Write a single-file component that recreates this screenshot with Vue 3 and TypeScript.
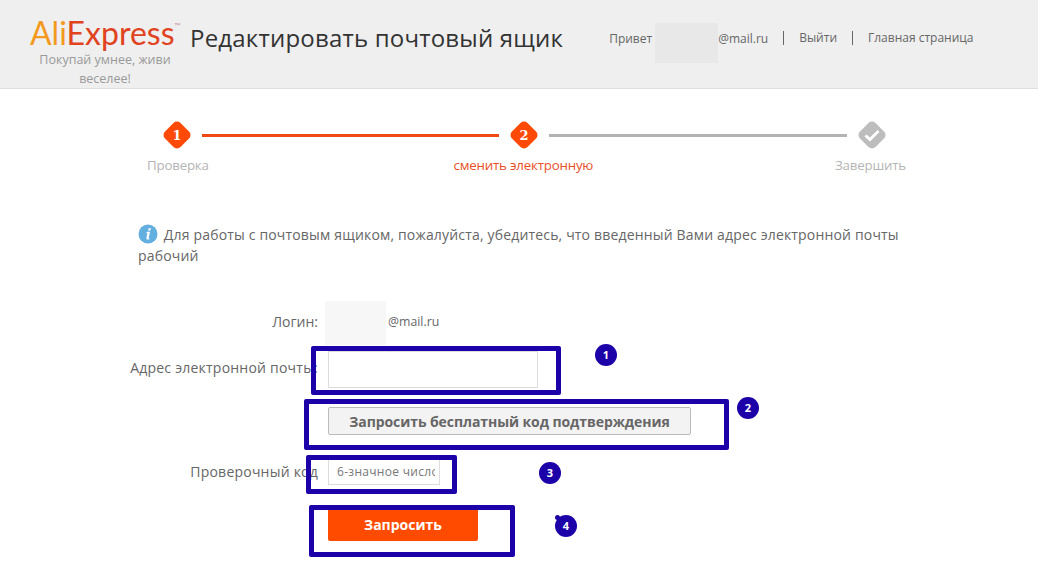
<script setup lang="ts">
interface Box { id: number; left: number; top: number; width: number; height: number }
interface Dot { id: number; left: number; top: number }
const boxes: Box[] = [
  { id: 1, left: 311, top: 346, width: 250, height: 49 },
  { id: 2, left: 304, top: 399, width: 425, height: 51 },
  { id: 3, left: 306, top: 455, width: 151, height: 39 },
  { id: 4, left: 309, top: 505, width: 206, height: 52 },
]
const dots: Dot[] = [
  { id: 1, left: 595, top: 344 },
  { id: 2, left: 737, top: 397 },
  { id: 3, left: 539, top: 462 },
  { id: 4, left: 555, top: 515 },
]
const px = (n: number) => `${n}px`
</script>

<template>
  <div class="page">
    <header class="top">
      <div class="brand">
        <div class="logo"><span class="ali">Ali</span><span class="exp">Express</span><sup class="tm">™</sup></div>
        <div class="slogan">Покупай умнее, живи веселее!</div>
      </div>
      <h1 class="title">Редактировать почтовый ящик</h1>
      <nav class="nav">
        <span class="hello">Привет</span>
        <span class="mail">@mail.ru</span>
        <a class="link first">Выйти</a>
        <a class="link">Главная страница</a>
      </nav>
    </header>

    <section class="steps">
      <div class="track">
        <div class="diamond on"><span>1</span></div>
        <div class="line on"></div>
        <div class="diamond on"><span>2</span></div>
        <div class="line"></div>
        <div class="diamond done">
          <svg width="16" height="14" viewBox="0 0 16 14"><path d="M1.5 7.5 L6 11.5 L14.5 3" fill="none" stroke="#fff" stroke-width="3"/></svg>
        </div>
      </div>
      <div class="labels">
        <span class="lab">Проверка</span>
        <span class="lab active">сменить электронную</span>
        <span class="lab">Завершить</span>
      </div>
    </section>

    <p class="notice">
      <svg class="info" width="20" height="20" viewBox="0 0 20 20"><circle cx="10" cy="10" r="9.5" fill="#62afe0"/><path d="M10.6 4.2h2.3l-.5 2.2h-2.3zM9.8 7.7h2.3l-1.5 6.3c-.1.5.3.5 1 .2l-.2 1c-1.6.7-3.3.5-3-1.1l.9-4.6c.1-.6-.3-.6-.9-.4l.2-1z" fill="#fff"/></svg>
      Для работы с почтовым ящиком, пожалуйста, убедитесь, что введенный Вами адрес электронной почты рабочий
    </p>

    <form class="form" @submit.prevent>
      <div class="row login">
        <label class="lbl">Логин:</label>
        <span class="val">@mail.ru</span>
      </div>
      <div class="row email">
        <label class="lbl">Адрес электронной почты:</label>
        <input class="inp wide" type="text" />
      </div>
      <div class="row send">
        <span class="lbl"></span>
        <button class="ask" type="button">Запросить бесплатный код подтверждения</button>
      </div>
      <div class="row code">
        <label class="lbl">Проверочный код</label>
        <input class="inp short" type="text" placeholder="6-значное число" />
      </div>
      <div class="row submit">
        <span class="lbl"></span>
        <button class="go" type="submit">Запросить</button>
      </div>
    </form>

    <div class="blur b1"></div>
    <div class="blur b2"></div>

    <div
      v-for="b in boxes"
      :key="b.id"
      class="mark"
      :style="{ left: px(b.left), top: px(b.top), width: px(b.width), height: px(b.height) }"
    ></div>
    <div
      v-for="d in dots"
      :key="d.id"
      class="dot"
      :class="{ nub: d.id === 4 }"
      :style="{ left: px(d.left), top: px(d.top) }"
    >{{ d.id }}</div>
  </div>
</template>

<style>
html, body { margin: 0; background: #fff; }
</style>

<style scoped>
.page {
  position: relative;
  width: 1038px;
  height: 562px;
  overflow: hidden;
  background: #fff;
  font-family: "Open Sans", "Noto Sans", sans-serif;
  color: #666;
}
.top {
  display: flex;
  height: 88px;
  background: #efefef;
  border-bottom: 1px solid #dfdfdf;
}
.brand { width: 150px; margin-left: 30px; text-align: center; flex: none; }
.logo {
  margin-top: 15px;
  height: 36px;
  line-height: 36px;
  font-family: Lato, sans-serif;
  font-size: 32px;
  font-weight: 400;
  white-space: nowrap;
  text-align: left;
}
.ali { color: #f39a1e; }
.exp { color: #e0431d; }
.tm { font-size: 8px; color: #c99; vertical-align: 16px; line-height: 0; }
.slogan {
  width: 150px;
  margin-top: -1px;
  font-size: 12.5px;
  line-height: 19px;
  color: #999;
}
.title {
  margin: 21px 0 0 10px;
  font-size: 24px;
  line-height: 34px;
  font-weight: 400;
  letter-spacing: 0.2px;
  color: #333;
  white-space: nowrap;
}
.nav {
  display: flex;
  align-items: center;
  height: 14px;
  margin: 31px 0 0 46px;
  font-size: 12px;
  color: #666;
  white-space: nowrap;
}
.hello { width: 109px; }
.mail { width: 50px; }
.link { padding-left: 15px; margin-left: 15px; border-left: 1px solid #666; line-height: 14px; }
.steps { padding-top: 31px; }
.track { display: flex; align-items: center; margin-left: 163px; height: 30px; }
.diamond {
  position: relative;
  width: 28px;
  height: 28px;
  flex: none;
  display: flex;
  align-items: center;
  justify-content: center;
  color: #fff;
  font-family: "DejaVu Serif", serif;
  font-weight: 700;
  font-size: 13px;
}
.diamond::before {
  content: "";
  position: absolute;
  left: 3px;
  top: 3px;
  width: 22px;
  height: 22px;
  border-radius: 5px;
  transform: rotate(45deg);
  background: #ff4a07;
}
.diamond.done::before { background: #bdbdbd; }
.diamond span, .diamond svg { position: relative; }
.line { width: 298px; height: 3px; margin: 0 11px; background: #b3b3b3; }
.line.on { background: #f04a12; width: 297px; }
.labels {
  display: flex;
  justify-content: space-between;
  margin: 5px 132px 0 147px;
  font-size: 13.3px;
  line-height: 20px;
}
.lab { color: #b5b5b5; letter-spacing: -0.2px; }
.lab.active { color: #e8501f; margin-left: 3px; }
.notice {
  width: 790px;
  margin: 49px 0 0 138px;
  font-size: 14px;
  line-height: 21px;
  letter-spacing: 0.17px;
  color: #666;
}
.info { vertical-align: -4px; margin-right: 2px; }
.form { margin-top: 45px; font-size: 14px; }
.row { display: flex; align-items: center; }
.lbl { width: 318px; flex: none; text-align: right; color: #666; white-space: nowrap; letter-spacing: 0.22px; }
.login { height: 20px; }
.login .lbl { letter-spacing: 0; }
.login .val { margin-left: 70px; font-size: 12.3px; }
.email { margin-top: 20px; height: 37px; }
.email .lbl { margin-top: -4px; }
.send { margin-top: 19px; }
.code { margin-top: 23px; }
.submit { margin-top: 23px; }
.inp, .ask, .go { margin-left: 10px; box-sizing: border-box; font-family: inherit; }
.inp {
  border: 1px solid #dcdcdc;
  background: #fff;
  outline: none;
}
.wide { width: 210px; height: 37px; }
.short {
  width: 112px;
  height: 27px;
  padding: 0 4px 0 8px;
  font-size: 12px;
  letter-spacing: 0.3px;
  color: #666;
}
.short::placeholder { color: #777; opacity: 1; }
.ask {
  width: 363px;
  height: 28px;
  padding: 0;
  border: 1px solid #bbb;
  border-radius: 2px;
  background: #f3f3f3;
  color: #666;
  font-size: 14px;
  font-weight: 700;
  letter-spacing: -0.08px;
}
.go {
  width: 150px;
  height: 33px;
  padding: 0;
  border: 0;
  border-radius: 2px;
  background: #ff4b00;
  color: #fff;
  font-size: 14px;
  font-weight: 700;
}
.blur { position: absolute; }
.b1 { left: 655px; top: 23px; width: 63px; height: 40px; background: #e8e8e8; }
.b2 { left: 325px; top: 301px; width: 61px; height: 44px; background: #f7f7f7; }
.mark {
  position: absolute;
  box-sizing: border-box;
  border: 5px solid #1c00a8;
  border-radius: 2px;
}
.dot {
  position: absolute;
  width: 22px;
  height: 22px;
  border-radius: 50%;
  background: #1c00a8;
  color: #fff;
  font-size: 11px;
  font-weight: 700;
  line-height: 22px;
  text-align: center;
}
.dot.nub::before {
  content: "";
  position: absolute;
  left: 0;
  top: 0;
  width: 5px;
  height: 5px;
  border-radius: 50%;
  background: #1c00a8;
}
</style>
